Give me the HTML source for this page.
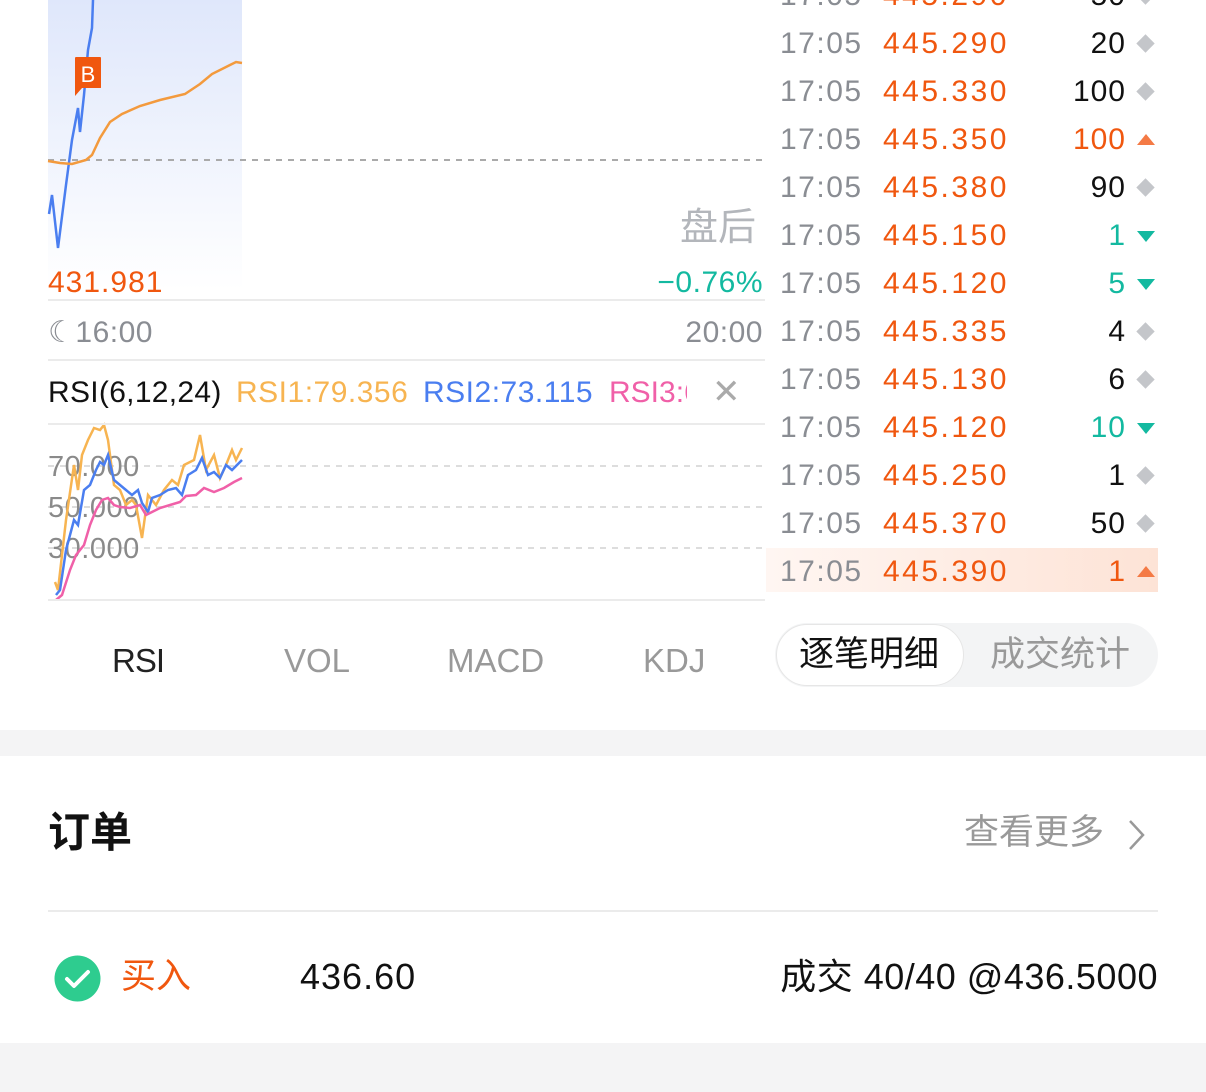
<!DOCTYPE html><html><head><meta charset="utf-8"><style>
*{margin:0;padding:0;box-sizing:border-box}
body{width:1206px;height:1092px;overflow:hidden;background:#fff;font-family:"Liberation Sans","Noto Sans CJK SC",sans-serif;position:relative}
.a{position:absolute;white-space:nowrap;line-height:1}
.t{color:#8a8d93;font-size:30px;left:780px;letter-spacing:1.5px}
.p{color:#f0570f;font-size:30px;left:883px;letter-spacing:2.5px}
.v{font-size:30px;right:80px;text-align:right;color:#111;letter-spacing:1px}
.hl{position:absolute;left:766px;top:548px;width:392px;height:44px;background:linear-gradient(90deg,#fff6f2,#fde3d6)}
</style></head><body>
<div class="a" style="left:48px;top:0;width:194px;height:290px;background:linear-gradient(#dfe7fb,#fff)"></div>
<svg class="a" style="left:0;top:0" width="770" height="610">
<line x1="48" y1="160" x2="765" y2="160" stroke="#aaa" stroke-width="2" stroke-dasharray="6 6"/>
<polyline fill="none" stroke="#4a7ef0" stroke-width="2.5" points="49,214 52,195 58,248 66,185 72,140 78,108 80,132 84,95 88,50 92,28 93,0"/>
<polyline fill="none" stroke="#f39a3d" stroke-width="2.5" points="48,161 60,163 72,164 86,160 92,155 100,138 110,122 122,114 140,106 160,100 185,94 200,84 212,74 230,65 236,62 242,63"/>
<path d="M77 57h23c1 0 1 1 1 1v29c0 1 0 1-1 1h-18l-7 8v-8c0 0 0 0 0 0v-30c0-1 1-1 2-1z" fill="#f0570f"/>
<text x="88" y="82" fill="#fff" font-size="22" text-anchor="middle" font-family="Liberation Sans">B</text>
<g stroke="#ddd" stroke-width="2" stroke-dasharray="6 6"><line x1="48" y1="466" x2="765" y2="466"/><line x1="48" y1="507" x2="765" y2="507"/><line x1="48" y1="548" x2="765" y2="548"/></g>
<g font-size="29" fill="#8a8a8a" font-family="Liberation Sans" letter-spacing="0.5"><text x="48" y="476">70.000</text><text x="48" y="517">50.000</text><text x="48" y="558">30.000</text></g>
<polyline fill="none" stroke="#f7b451" stroke-width="2.5" points="55,582 58,590 66,520 74,465 78,490 82,455 88,440 94,428 100,430 104,425 108,440 114,485 120,490 126,505 132,500 136,505 142,538 148,495 156,505 164,490 172,480 178,485 184,465 194,460 200,435 206,470 214,455 220,478 226,465 232,450 236,460 242,448"/>
<polyline fill="none" stroke="#4a7ef0" stroke-width="2.5" points="56,595 60,590 66,550 74,520 78,525 84,490 90,485 96,470 100,462 104,465 108,455 114,480 120,485 126,490 132,495 138,490 142,503 148,512 152,498 160,495 168,490 176,488 182,495 188,475 196,470 202,458 208,475 214,472 220,478 226,465 232,470 242,460"/>
<polyline fill="none" stroke="#f060a8" stroke-width="2.5" points="56,600 62,595 70,570 76,555 84,545 90,525 96,510 102,500 108,498 114,505 120,507 130,508 140,505 146,515 152,512 160,508 170,505 180,502 186,496 196,495 204,488 214,492 224,488 234,482 242,478"/>
</svg>
<div class="a" style="left:680px;top:209px;font-size:38px;color:#b3b6bb">盘后</div>
<div class="a" style="left:48px;top:268px;font-size:30px;color:#f0570f;letter-spacing:1px">431.981</div>
<div class="a" style="right:443px;top:268px;font-size:30px;color:#13b9a0;letter-spacing:0.5px">−0.76%</div>
<div class="a" style="left:48px;top:299px;width:717px;height:2px;background:#ebebeb"></div>
<div class="a" style="left:48px;top:318px;font-size:30px;color:#8a8d93;letter-spacing:0.5px">☾16:00</div>
<div class="a" style="right:443px;top:318px;font-size:30px;color:#8a8d93;letter-spacing:0.5px">20:00</div>
<div class="a" style="left:48px;top:359px;width:717px;height:2px;background:#ebebeb"></div>
<div class="a" style="left:48px;top:378px;font-size:30px;color:#111;letter-spacing:0.3px">RSI(6,12,24)</div>
<div class="a" style="left:236px;top:378px;font-size:30px;color:#f7b451;letter-spacing:0.5px">RSI1:79.356</div>
<div class="a" style="left:423px;top:378px;font-size:30px;color:#4a7ef0;letter-spacing:0.5px">RSI2:73.115</div>
<div class="a" style="left:609px;top:378px;width:78px;overflow:hidden;font-size:30px;color:#f060a8">RSI3:64</div>
<div class="a" style="left:712px;top:375px;font-size:34px;color:#aaa">✕</div>
<div class="a" style="left:48px;top:423px;width:717px;height:2px;background:#ebebeb"></div>
<div class="a" style="left:48px;top:599px;width:717px;height:2px;background:#ebebeb"></div>
<div class="a" style="left:112px;top:644px;font-size:33px;color:#222;letter-spacing:-1px">RSI</div>
<div class="a" style="left:284px;top:644px;font-size:33px;color:#999">VOL</div>
<div class="a" style="left:447px;top:644px;font-size:33px;color:#999">MACD</div>
<div class="a" style="left:643px;top:644px;font-size:33px;color:#999">KDJ</div>
<div class="hl"></div>
<div id="rows"></div>
<script>
var d=[["445.290","50","d"],["445.290","20","d"],["445.330","100","d"],["445.350","100","u"],["445.380","90","d"],["445.150","1","g"],["445.120","5","g"],["445.335","4","d"],["445.130","6","d"],["445.120","10","g"],["445.250","1","d"],["445.370","50","d"],["445.390","1","u"]];
var h="";d.forEach(function(r,i){var y=-5+48*i-14;var vc=r[2]=="u"?"#f0570f":r[2]=="g"?"#13b9a0":"#111";
var ic=r[2]=="d"?'<div class="a" style="left:1139px;top:'+(y+8)+'px;width:13px;height:13px;background:#c4c6ca;transform:rotate(45deg)"></div>':r[2]=="u"?'<div class="a" style="left:1137px;top:'+(y+9)+'px;border-left:9px solid transparent;border-right:9px solid transparent;border-bottom:11px solid #f47a45"></div>':'<div class="a" style="left:1137px;top:'+(y+10)+'px;border-left:9px solid transparent;border-right:9px solid transparent;border-top:11px solid #13b9a0"></div>';
h+='<div class="a t" style="top:'+y+'px">17:05</div><div class="a p" style="top:'+y+'px">'+r[0]+'</div><div class="a v" style="top:'+y+'px;color:'+vc+'">'+r[1]+'</div>'+ic;});
document.getElementById("rows").innerHTML=h;
</script>
<div class="a" style="left:775px;top:623px;width:383px;height:64px;border-radius:32px;background:#f3f4f5"></div>
<div class="a" style="left:776px;top:624px;width:188px;height:62px;border-radius:31px;background:#fff;border:1px solid #e6e6e6"></div>
<div class="a" style="left:799px;top:637px;font-size:35px;color:#111">逐笔明细</div>
<div class="a" style="left:990px;top:637px;font-size:35px;color:#999">成交统计</div>
<div class="a" style="left:0;top:730px;width:1206px;height:26px;background:#f4f4f5"></div>
<div class="a" style="left:48px;top:812px;font-size:42px;color:#111;font-weight:bold">订单</div>
<div class="a" style="left:964px;top:815px;font-size:35px;color:#999">查看更多</div>
<svg class="a" style="left:1126px;top:818px" width="22" height="34"><path d="M4 3l13 14-13 14" fill="none" stroke="#999" stroke-width="2.5"/></svg>
<div class="a" style="left:48px;top:910px;width:1110px;height:2px;background:#ebebeb"></div>
<svg class="a" style="left:54px;top:955px" width="47" height="47"><circle cx="23.5" cy="23.5" r="23" fill="#2ecc8f"/><path d="M13 24l7 7 14-14" fill="none" stroke="#fff" stroke-width="4" stroke-linecap="round" stroke-linejoin="round"/></svg>
<div class="a" style="left:121px;top:959px;font-size:35px;color:#f0570f">买入</div>
<div class="a" style="left:300px;top:959px;font-size:36px;color:#111;letter-spacing:1px">436.60</div>
<div class="a" style="right:48px;top:959px;font-size:36px;color:#111;letter-spacing:0.5px">成交 40/40 @436.5000</div>
<div class="a" style="left:0;top:1043px;width:1206px;height:49px;background:#f4f4f5"></div>
</body></html>
